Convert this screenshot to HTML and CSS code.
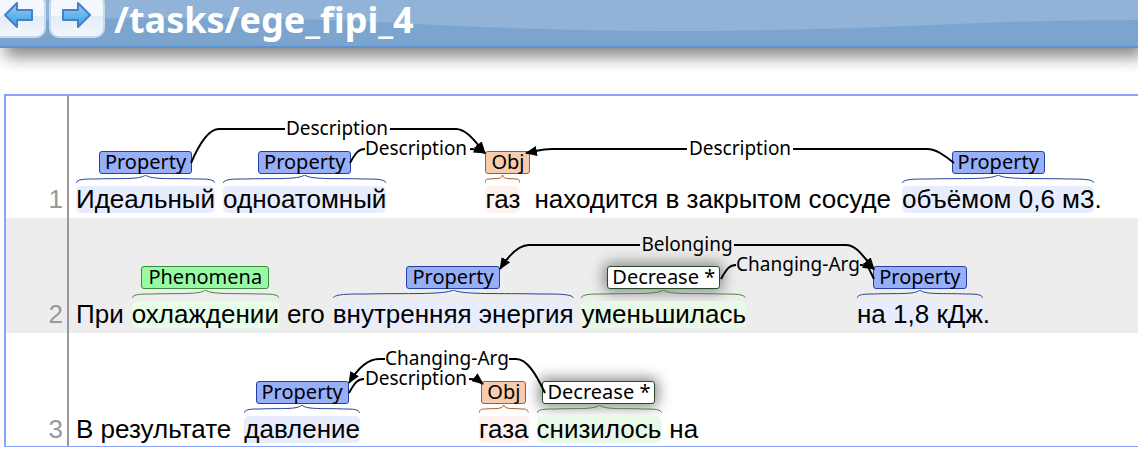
FILE: index.html
```html
<!DOCTYPE html>
<html lang="ru">
<head>
<meta charset="utf-8">
<title>/tasks/ege_fipi_4</title>
<link rel="stylesheet" href="styles.css">
</head>
<body>
<header class="bar">
  <svg class="gloss" viewBox="0 0 1138 46" preserveAspectRatio="none" aria-hidden="true">
    <path d="M0 0H1138V20Q1060 20 980 23Q820 31 660 31Q520 30 400 23Q250 15 0 20Z" fill="#91b3d7"/>
  </svg>
  <button class="nav nav-prev" type="button" aria-label="Previous document">
    <svg width="30" height="28" viewBox="0 0 30 28"><path d="M2 14L14 2V9H29V19H14V26Z" fill="url(#arrow)" stroke="#4a7fc0" stroke-width="2" stroke-linejoin="round"/></svg>
  </button>
  <button class="nav" type="button" aria-label="Next document">
    <svg width="30" height="28" viewBox="0 0 30 28"><defs><linearGradient id="arrow" x1="0" y1="0" x2="0" y2="1"><stop offset="0" stop-color="#8fd0f8"/><stop offset="1" stop-color="#3f9be6"/></linearGradient></defs><path d="M28 14L16 2V9H1V19H16V26Z" fill="url(#arrow)" stroke="#4a7fc0" stroke-width="2" stroke-linejoin="round"/></svg>
  </button>
  <h1 class="title">/tasks/ege_fipi_4</h1>
</header>

<svg class="defs" width="0" height="0" aria-hidden="true">
  <defs>
    <marker id="head" markerUnits="userSpaceOnUse" markerWidth="12" markerHeight="10" refX="11" refY="5" orient="auto"><path class="head" d="M0 0L12 5L0 10Z"/></marker>
    <symbol id="brace" viewBox="0 0 100 9" preserveAspectRatio="none">
      <path d="M0 8C1 4 6 4 14 4C30 3 46 5 50 0C54 5 70 3 86 4C94 4 99 4 100 8" fill="none" stroke="currentColor" vector-effect="non-scaling-stroke"/>
    </symbol>
  </defs>
</svg>

<main class="doc">
  <section class="row row-first">
    <span class="num">1</span>
    <div class="sentence">
      <span class="span property"><span class="tag">Property</span><svg class="brace"><use href="#brace"/></svg><span class="word">Идеальный</span></span>
      <span class="span property"><span class="tag">Property</span><svg class="brace"><use href="#brace"/></svg><span class="word">одноатомный</span></span>
      <span class="span obj gap-wide"><span class="tag tag-start">Obj</span><svg class="brace"><use href="#brace"/></svg><span class="word">газ</span></span>
      <span class="plain gap-small">находится в закрытом сосуде</span>
      <span class="span property gap-hair"><span class="tag">Property</span><svg class="brace"><use href="#brace"/></svg><span class="word">объёмом 0,6 м3</span></span>
      <span class="plain dot">.</span>
    </div>
    <svg class="arcs" width="1132" height="84" viewBox="6 96 1132 84">
      <path d="M191 163C200 142 210 129 219 129H285"/>
      <text x="337" y="135">Description</text>
      <path class="to" d="M390 129H456C466 129 474 140 485 153"/>
      <path d="M350 163C356 152 359 149 365 149"/>
      <text x="416" y="155">Description</text>
      <path class="to" d="M470 149C476 149 479 150 485 153"/>
      <path class="to" d="M687 149H552C543 149 537 151 526 153"/>
      <text x="740" y="155">Description</text>
      <path d="M793 149H927C936 149 944 155 954 163"/>
    </svg>
  </section>

  <section class="row row-alt">
    <span class="num">2</span>
    <div class="sentence">
      <span class="plain">При</span>
      <span class="span phenomena"><span class="tag">Phenomena</span><svg class="brace"><use href="#brace"/></svg><span class="word">охлаждении</span></span>
      <span class="plain">его</span>
      <span class="span property"><span class="tag">Property</span><svg class="brace"><use href="#brace"/></svg><span class="word">внутренняя энергия</span></span>
      <span class="span decrease"><span class="tag">Decrease *</span><svg class="brace"><use href="#brace"/></svg><span class="word">уменьшилась</span></span>
      <span class="span property gap-wide"><span class="tag">Property</span><svg class="brace"><use href="#brace"/></svg><span class="word">на 1,8 кДж</span></span>
      <span class="plain dot">.</span>
    </div>
    <svg class="arcs" width="1132" height="84" viewBox="6 218 1132 84">
      <path class="to" d="M640 245H529C518 245 509 255 500 269"/>
      <text x="687" y="251">Belonging</text>
      <path class="to" d="M734 245H846C856 245 863 256 874 269"/>
      <path d="M721 279C727 268 730 265 736 265"/>
      <text x="798" y="271">Changing-Arg</text>
      <path class="to" d="M860 265C866 265 869 266 874 269"/>
      <path d="M866 264C869 268 871 273 874 279"/>
    </svg>
  </section>

  <section class="row row-last">
    <span class="num">3</span>
    <div class="sentence">
      <span class="plain">В результате</span>
      <span class="span property gap-tiny"><span class="tag">Property</span><svg class="brace"><use href="#brace"/></svg><span class="word">давление</span></span>
      <span class="span obj gap-wide"><span class="tag">Obj</span><svg class="brace"><use href="#brace"/></svg><span class="word">газа</span></span>
      <span class="span decrease"><span class="tag">Decrease *</span><svg class="brace"><use href="#brace"/></svg><span class="word">снизилось</span></span>
      <span class="plain">на</span>
    </div>
    <svg class="arcs" width="1132" height="84" viewBox="6 333 1132 84">
      <path class="to" d="M385 359H379C367 359 358 368 349 383"/>
      <text x="447" y="365">Changing-Arg</text>
      <path d="M509 359H516C527 359 536 374 545 393"/>
      <path d="M349 393C355 382 358 379 364 379"/>
      <text x="416" y="385">Description</text>
      <path class="to" d="M469 379C475 379 478 380 483 384"/>
    </svg>
  </section>
</main>
</body>
</html>
```
FILE: styles.css
```css
body {
  margin: 0;
  background: #fff;
  color: #000;
  overflow: hidden;
}

.bar {
  position: relative;
  display: flex;
  align-items: flex-start;
  gap: 3px;
  height: 46px;
  background: #7ba5ce;
  border-bottom: 2px solid #5a93d0;
  box-shadow: 5px 9px 16px #888;
}

.gloss {
  position: absolute;
  inset: 0;
  width: 100%;
  height: 100%;
}

.nav {
  position: relative;
  box-sizing: border-box;
  display: flex;
  justify-content: center;
  width: 56px;
  height: 44px;
  margin-top: -6px;
  padding: 5px 0 0;
  border: 2px solid #c5dbec;
  border-radius: 10px;
  background: linear-gradient(#f3f8fd 50%, #e3edf8 50%, #f0f6fc);
}

.nav-prev {
  margin-left: -10px;
}

.title {
  position: relative;
  margin: 0 0 0 6px;
  color: #fff;
  font: bold 36px/40px "Noto Sans", sans-serif;
}

.defs {
  position: absolute;
}

.doc {
  margin: 46px 0 0 4px;
  border: 2px solid #8aa3fa;
  border-right: 0;
  border-bottom-width: 1px;
}

.row {
  position: relative;
  display: flex;
}

.row-alt {
  background: #ededed;
}

.num {
  box-sizing: border-box;
  display: flex;
  align-items: flex-end;
  justify-content: flex-end;
  flex: none;
  width: 63px;
  padding: 0 4px 5px 0;
  border-right: 2px solid #999;
  color: #999;
  font: 26px/27px "Liberation Sans", Arial, sans-serif;
}

.sentence {
  display: flex;
  align-items: flex-end;
  gap: 8px;
  padding: 48px 0 5px 7px;
  font: 26px/27px "Liberation Sans", Arial, sans-serif;
  white-space: nowrap;
}

.row-first .sentence {
  padding-top: 55px;
}

.row-last .sentence,
.row-last .num {
  padding-bottom: 3px;
}

.span {
  display: flex;
  flex-direction: column;
  align-items: center;
}

.gap-wide {
  margin-left: 91px;
}

.row-alt .gap-wide {
  margin-left: 103px;
}

.row-last .gap-wide {
  margin-left: 111px;
}

.gap-small {
  margin-left: 6px;
}

.gap-tiny {
  margin-left: 5px;
}

.gap-hair {
  margin-left: 3px;
}

.dot {
  margin-left: -8px;
}

.tag {
  box-sizing: border-box;
  height: 23px;
  padding: 0 5px;
  border: 1px solid;
  border-radius: 3px;
  font: 20px/20px "Noto Sans", sans-serif;
}

.tag-start {
  align-self: flex-start;
  margin-right: -12px;
}

.brace {
  width: 0;
  min-width: 100%;
  height: 9px;
  margin: 1px 0 2px;
  overflow: visible;
}

.word {
  border-radius: 5px;
}

.property .tag {
  background: #97aef9;
  border-color: #2440a0;
}

.property .brace {
  color: #2440a0;
}

.property .word {
  background: #e8edfe;
}

.obj .tag {
  background: #f7ccae;
  border-color: #a8582e;
}

.obj .brace {
  color: #a8582e;
}

.obj .word {
  background: #fdf2ed;
}

.phenomena .tag {
  padding: 0 6px;
  background: #98fba4;
  border-color: #3c8a3c;
}

.phenomena .word {
  background: #e6fee8;
}

.phenomena .brace,
.decrease .brace {
  color: #3f8a35;
}

.decrease .tag {
  padding: 0 4px;
  background: #fff;
  border-color: #274a27;
  box-shadow: 0 0 14px 3px #888;
}

.decrease .word {
  background: #e9f9e8;
}

.arcs {
  position: absolute;
  top: 0;
  left: 0;
}

.arcs path {
  fill: none;
  stroke: #000;
  stroke-width: 2;
}

.head {
  fill: #000;
}

.arcs .to {
  marker-end: url(#head);
}

.arcs text {
  font: 19px "Noto Sans", sans-serif;
  text-anchor: middle;
}
```
